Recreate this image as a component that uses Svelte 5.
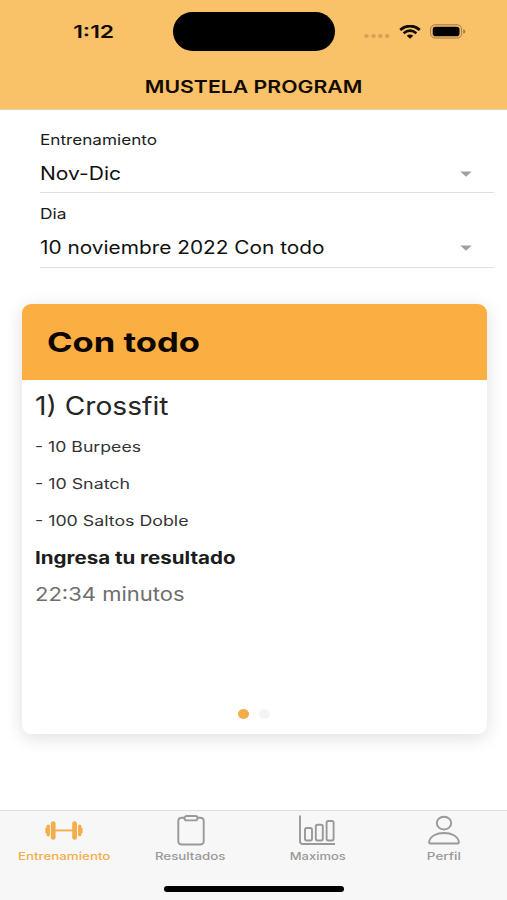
<script>
  const fields = [
    { label: 'Entrenamiento', labelWidth: 117, value: 'Nov-Dic', valueWidth: 81 },
    { label: 'Dia', labelWidth: 26.5, value: '10 noviembre 2022 Con todo', valueWidth: 284.5 }
  ];

  const exercises = [
    { text: '- 10 Burpees', width: 106 },
    { text: '- 10 Snatch', width: 95 },
    { text: '- 100 Saltos Doble', width: 153.5 }
  ];

  const tabs = [
    { name: 'Entrenamiento', icon: 'dumbbell', width: 92.5, active: true },
    { name: 'Resultados', icon: 'clipboard', width: 70.5 },
    { name: 'Maximos', icon: 'chart', width: 56 },
    { name: 'Perfil', icon: 'person', width: 34 }
  ];

  // Widens a label horizontally until it spans the given width.
  function fit(node, width) {
    node.style.transform = `scaleX(${width / node.getBoundingClientRect().width})`;
  }
</script>

<div class="screen">
  <header>
    <div class="status">
      <div class="time"><span class="centered" use:fit={41}>1:12</span></div>
      <div class="island"></div>
      <div class="indicators">
        <svg class="dots" width="26" height="6" viewBox="0 0 26 6" fill="#d4a057">
          <ellipse cx="2.5" cy="3" rx="2.3" ry="2" /><ellipse cx="9.5" cy="3" rx="2.3" ry="2" />
          <ellipse cx="16.3" cy="3" rx="2.3" ry="2" /><ellipse cx="23.2" cy="3" rx="2.3" ry="2" />
        </svg>
        <svg class="wifi" width="22" height="14" viewBox="0 0 22 14" fill="none" stroke="#120b02">
          <path d="M1.2 4.8Q11-2.7 20.8 4.8" stroke-width="2.8" />
          <path d="M4.6 8.2Q11 3.2 17.4 8.2" stroke-width="2.6" />
          <path d="M7.7 10.8Q11 8.2 14.3 10.8L11 13.7Z" fill="#120b02" stroke="none" />
        </svg>
        <svg class="battery" width="36" height="15" viewBox="0 0 36 15">
          <rect x=".6" y=".8" width="31" height="13.2" rx="4.5" fill="none" stroke="#9d7846" />
          <rect x="2.7" y="2.7" width="26.8" height="9.5" rx="2.8" fill="#000" />
          <path d="M33.2 5.3Q35.4 5.8 35.4 7.5T33.2 9.7Z" fill="#a47c46" />
        </svg>
      </div>
    </div>
    <h1><span class="centered" use:fit={217.5}>MUSTELA PROGRAM</span></h1>
  </header>

  <main>
    <section class="fields">
      {#each fields as field}
        <div class="field">
          <div class="label"><span use:fit={field.labelWidth}>{field.label}</span></div>
          <div class="value">
            <span use:fit={field.valueWidth}>{field.value}</span>
            <svg width="12" height="6" viewBox="0 0 12 6"><path d="M.3.4H11.7L6 5.8Z" fill="#9f9f9f" /></svg>
          </div>
        </div>
      {/each}
    </section>

    <article class="card">
      <h2><span use:fit={153}>Con todo</span></h2>
      <div class="body">
        <h3><span use:fit={133.5}>1) Crossfit</span></h3>
        {#each exercises as exercise}
          <p><span use:fit={exercise.width}>{exercise.text}</span></p>
        {/each}
        <h4><span use:fit={200.5}>Ingresa tu resultado</span></h4>
        <div class="result"><span use:fit={149.5}>22:34 minutos</span></div>
      </div>
      <div class="pager"><i class="on"></i><i></i></div>
    </article>
  </main>

  <footer>
    <nav>
      {#each tabs as tab}
        <div class="tab" class:active={tab.active}>
          {#if tab.icon === 'dumbbell'}
            <svg width="38" height="32" viewBox="0 0 38 32" fill="currentColor">
              <rect x=".3" y="12.5" width="2.4" height="6" rx="1" />
              <rect x="1.5" y="9.5" width="3.4" height="12" rx="1.7" />
              <rect x="5.8" y="6.3" width="4.8" height="18.5" rx="2.3" />
              <rect x="10" y="14.5" width="18" height="1.9" />
              <rect x="27.2" y="6.3" width="4.8" height="18.5" rx="2.3" />
              <rect x="33" y="9.5" width="3.4" height="12" rx="1.7" />
              <rect x="35.2" y="12.5" width="2.4" height="6" rx="1" />
            </svg>
          {:else if tab.icon === 'clipboard'}
            <svg width="38" height="32" viewBox="0 0 38 32" fill="none" stroke="currentColor" stroke-width="1.9">
              <path d="M12.5 2.7H10Q6.3 2.7 6.3 5.9V26.3Q6.3 29.5 10 29.5H28Q31.7 29.5 31.7 26.3V5.9Q31.7 2.7 28 2.7H25.5" />
              <rect x="12.5" y="1" width="13" height="4.4" rx="2.2" />
            </svg>
          {:else if tab.icon === 'chart'}
            <svg width="38" height="32" viewBox="0 0 38 32" fill="none" stroke="currentColor" stroke-width="1.9">
              <path d="M2 .5V26.2Q2 29 5 29H37" />
              <rect x="7" y="13" width="7" height="12.5" rx="1.7" />
              <rect x="17.8" y="9.8" width="7" height="15.7" rx="1.7" />
              <rect x="28.6" y="6" width="7" height="19.5" rx="1.7" />
            </svg>
          {:else}
            <svg width="38" height="32" viewBox="0 0 38 32" fill="none" stroke="currentColor" stroke-width="1.9">
              <ellipse cx="19" cy="8.1" rx="7.2" ry="6.4" />
              <path d="M5.5 28.5Q3.9 28.5 4.1 27C5.1 21.1 11.5 18 19 18S32.9 21.1 33.9 27Q34.1 28.5 32.5 28.5Z" />
            </svg>
          {/if}
          <span class="centered" use:fit={tab.width}>{tab.name}</span>
        </div>
      {/each}
    </nav>
    <div class="home"></div>
  </footer>
</div>

<style>
  :global(body) { margin: 0; }
  .screen {
    width: 507px; height: 900px; display: flex; flex-direction: column; overflow: hidden;
    background: #fff; color: #1c1c1c; font-family: Inter, "Liberation Sans", sans-serif;
  }
  h1, h2, h3, h4, p { margin: 0; }
  span { display: inline-block; white-space: nowrap; transform-origin: left center; }
  .centered { transform-origin: center; }

  header { height: 109px; background: #f9c168; color: #120b02; border-bottom: 1px solid #e9d2ac; flex: none; }
  .status { height: 63px; display: grid; grid-template-columns: 173px 162px 1fr; align-items: center; }
  .time { padding-left: 14px; text-align: center; font-size: 17.5px; font-weight: 600; line-height: 24px; }
  .island { height: 39px; border-radius: 20px; background: #000; }
  .indicators { display: flex; align-items: center; padding-left: 28.5px; }
  .dots { margin-top: 9px; }
  .wifi { margin-left: 9px; }
  .battery { margin-left: 9px; }
  h1 { padding-left: 1px; text-align: center; font-size: 17.5px; font-weight: 600; line-height: 48px; }

  main { flex: 1; display: flex; flex-direction: column; }
  .fields { padding: 9px 13px 0 39.5px; }
  .field { height: 73.3px; border-bottom: 1px solid #dfdfdf; }
  .label { padding-top: 11px; font-size: 14.5px; line-height: 20px; }
  .value {
    display: flex; justify-content: space-between; align-items: center;
    margin-top: 7px; padding-right: 22px; font-size: 18px; line-height: 34px; height: 34px; color: #111;
  }

  .card {
    width: 465.5px; height: 430.5px; margin: 36px 0 0 21.5px; display: flex; flex-direction: column;
    border-radius: 9px; overflow: hidden; background: #fff; box-shadow: 0 4px 18px rgba(0, 0, 0, .13);
  }
  h2 { padding-left: 25px; background: #fbae42; color: #0c0500; font-size: 27.5px; font-weight: 700; line-height: 76.5px; }
  .body { flex: 1; padding-left: 13px; }
  h3 { padding-top: 5px; font-size: 25px; font-weight: 400; line-height: 42px; color: #262626; }
  p { font-size: 14px; line-height: 37px; color: #333; }
  p:first-of-type { margin-top: 1.2px; }
  h4 { padding-top: 1px; font-size: 16.7px; font-weight: 700; line-height: 37px; }
  .result { font-size: 19px; line-height: 36px; color: #6e6e6e; }
  .pager { display: flex; justify-content: center; gap: 10px; padding-bottom: 15.5px; }
  .pager i { width: 11px; height: 9.5px; border-radius: 50%; background: #f4f4f4; }
  .pager .on { background: #f2ad4b; }

  footer { height: 89px; border-top: 1px solid #dedede; background: #f7f7f7; flex: none; }
  nav { height: 75px; display: grid; grid-template-columns: repeat(4, 1fr); }
  .tab {
    display: flex; flex-direction: column; align-items: center; padding: 4px 0 0 1px;
    font-size: 11px; font-weight: 500; line-height: 18px; color: #999;
  }
  .active { color: #f3ae4b; }
  .home { width: 180.5px; height: 5.5px; margin-left: 163.5px; border-radius: 3px; background: #000; }
</style>
